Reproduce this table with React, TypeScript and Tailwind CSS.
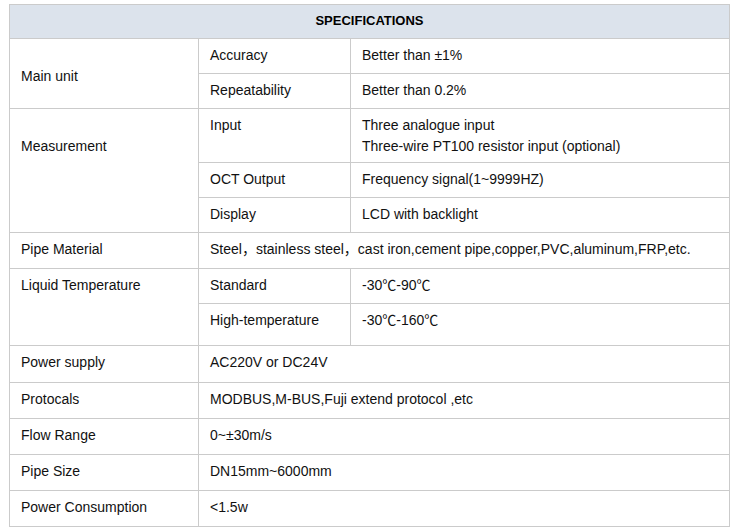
const font = { fontFamily: '"Liberation Sans", Arial, "Noto Sans CJK SC", sans-serif' }

function Cell({ children, className = "" }: { children?: React.ReactNode; className?: string }) {
    return <div className={"pl-[11px] pr-3 pt-[6px] leading-[21px] " + className}>{children}</div>
}

function Row({ label, value, h, last = false }: { label: string; value: React.ReactNode; h: string; last?: boolean }) {
    return (
        <div className={"flex " + h + (last ? "" : " border-b border-[#cbcbcb]")}>
            <Cell className="w-[189px] shrink-0 border-r border-[#cbcbcb]">{label}</Cell>
            <Cell className="flex-1">{value}</Cell>
        </div>
    )
}

function Sub({ label, value, h, last = false }: { label: string; value: React.ReactNode; h: string; last?: boolean }) {
    return (
        <div className={"flex " + h + (last ? "" : " border-b border-[#cbcbcb]")}>
            <Cell className="w-[152px] shrink-0 border-r border-[#cbcbcb]">{label}</Cell>
            <Cell className="flex-1">{value}</Cell>
        </div>
    )
}

function Group({ label, top, children }: { label: string; top: string; children: React.ReactNode }) {
    return (
        <div className="flex border-b border-[#cbcbcb]">
            <div className={"w-[189px] shrink-0 border-r border-[#cbcbcb] pl-[11px] pr-3 leading-[21px] " + top}>{label}</div>
            <div className="flex-1 flex flex-col">{children}</div>
        </div>
    )
}

export default function App() {
    return (
        <div className="w-[738px] h-[531px] bg-white pt-[4px] pl-[9px] text-[14px] text-[#111]" style={font}>
            <div className="w-[721px] border border-[#cbcbcb]">
                <div className="h-[34px] flex items-center justify-center bg-[#dce3ec] border-b border-[#cbcbcb] font-bold text-[13px] text-black pb-px">
                    SPECIFICATIONS
                </div>
                <Group label="Main unit" top="pt-[27px]">
                    <Sub label="Accuracy" value="Better than ±1%" h="h-[35px]" />
                    <Sub label="Repeatability" value="Better than 0.2%" h="h-[34px]" last />
                </Group>
                <Group label="Measurement" top="pt-[27px]">
                    <Sub
                        label="Input"
                        value={<>Three analogue input<br />Three-wire PT100 resistor input (optional)</>}
                        h="h-[54px]"
                    />
                    <Sub label="OCT Output" value="Frequency signal(1~9999HZ)" h="h-[35px]" />
                    <Sub label="Display" value="LCD with backlight" h="h-[34px]" last />
                </Group>
                <Row
                    label="Pipe Material"
                    value="Steel，stainless steel，cast iron,cement pipe,copper,PVC,aluminum,FRP,etc."
                    h="h-[36px]"
                />
                <Group label="Liquid Temperature" top="pt-[6px]">
                    <Sub label="Standard" value="-30℃-90℃" h="h-[35px]" />
                    <Sub label="High-temperature" value="-30℃-160℃" h="h-[41px]" last />
                </Group>
                <Row label="Power supply" value="AC220V or DC24V" h="h-[37px]" />
                <Row label="Protocals" value="MODBUS,M-BUS,Fuji extend protocol ,etc" h="h-[36px]" />
                <Row label="Flow Range" value="0~±30m/s" h="h-[36px]" />
                <Row label="Pipe Size" value="DN15mm~6000mm" h="h-[36px]" />
                <Row label="Power Consumption" value="<1.5w" h="h-[35px]" last />
            </div>
        </div>
    )
}
